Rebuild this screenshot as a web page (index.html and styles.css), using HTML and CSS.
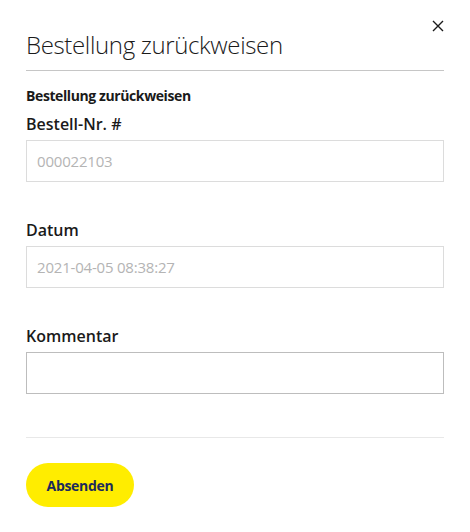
FILE: index.html
```html
<!DOCTYPE html>
<html lang="de">
<head>
<meta charset="utf-8">
<link rel="stylesheet" href="styles.css">
</head>
<body>
<div class="modal">
  <button class="close" aria-label="Schließen">
    <svg width="12" height="12" viewBox="0 0 12 12"><path d="M1 1L11 11M11 1L1 11" stroke="#1a1a1a" stroke-width="1.4" fill="none"/></svg>
  </button>
  <h1 class="title">Bestellung zurückweisen</h1>
  <div class="rule"></div>
  <h2 class="subtitle">Bestellung zurückweisen</h2>
  <div class="field">
    <label class="label">Bestell-Nr. #</label>
    <input class="input" type="text" placeholder="000022103">
  </div>
  <div class="field">
    <label class="label">Datum</label>
    <input class="input" type="text" placeholder="2021-04-05 08:38:27">
  </div>
  <div class="field">
    <label class="label">Kommentar</label>
    <div class="textarea"></div>
  </div>
  <div class="divider"></div>
  <button class="submit">Absenden</button>
</div>
</body>
</html>
```
FILE: styles.css
```css
html, body {
  margin: 0;
  padding: 0;
  background: #fff;
}
body {
  font-family: "Open Sans", "Noto Sans", sans-serif;
  color: #1a1a1a;
}
.modal {
  position: relative;
  padding: 30px 26px 0 26px;
  width: 418px;
}
.close {
  position: absolute;
  top: 20px;
  right: 26px;
  background: none;
  border: none;
  padding: 0;
  width: 12px;
  height: 12px;
  cursor: pointer;
}
.close svg { display: block; }
.title {
  margin: 0;
  font-weight: 300;
  font-size: 24px;
  line-height: 30px;
  letter-spacing: -0.35px;
  color: #1a1a1a;
}
.rule {
  height: 1px;
  background: #c6c6c6;
  margin-top: 10px;
}
.subtitle {
  margin: 16px 0 0 0;
  font-size: 14px;
  font-weight: 700;
  line-height: 18px;
  letter-spacing: -0.4px;
  color: #1a1a1a;
}
.field {
  display: flex;
  flex-direction: column;
}
.label {
  font-size: 16px;
  font-weight: 600;
  line-height: 22px;
  margin-top: 8px;
  margin-bottom: 5px;
}
.field + .field .label { margin-top: 37px; }
.input {
  box-sizing: border-box;
  height: 42px;
  width: 418px;
  border: 1px solid #dcdcdc;
  padding: 0 10px;
  font-family: "Open Sans", sans-serif;
  font-size: 15px;
  letter-spacing: -0.2px;
  color: #333;
  outline: none;
}
.input::placeholder { color: #b4b4b4; }
.textarea {
  box-sizing: border-box;
  height: 42px;
  width: 418px;
  border: 1px solid #bdbdbd;
}
.divider {
  height: 1px;
  background: #e8e8e8;
  margin-top: 43px;
}
.submit {
  display: block;
  margin-top: 25px;
  width: 108px;
  height: 44px;
  border: none;
  border-radius: 22px;
  background: #ffed00;
  color: #1c2a5c;
  font-family: "Open Sans", sans-serif;
  font-weight: 700;
  font-size: 14px;
  letter-spacing: -0.3px;
  padding: 0;
}
```
